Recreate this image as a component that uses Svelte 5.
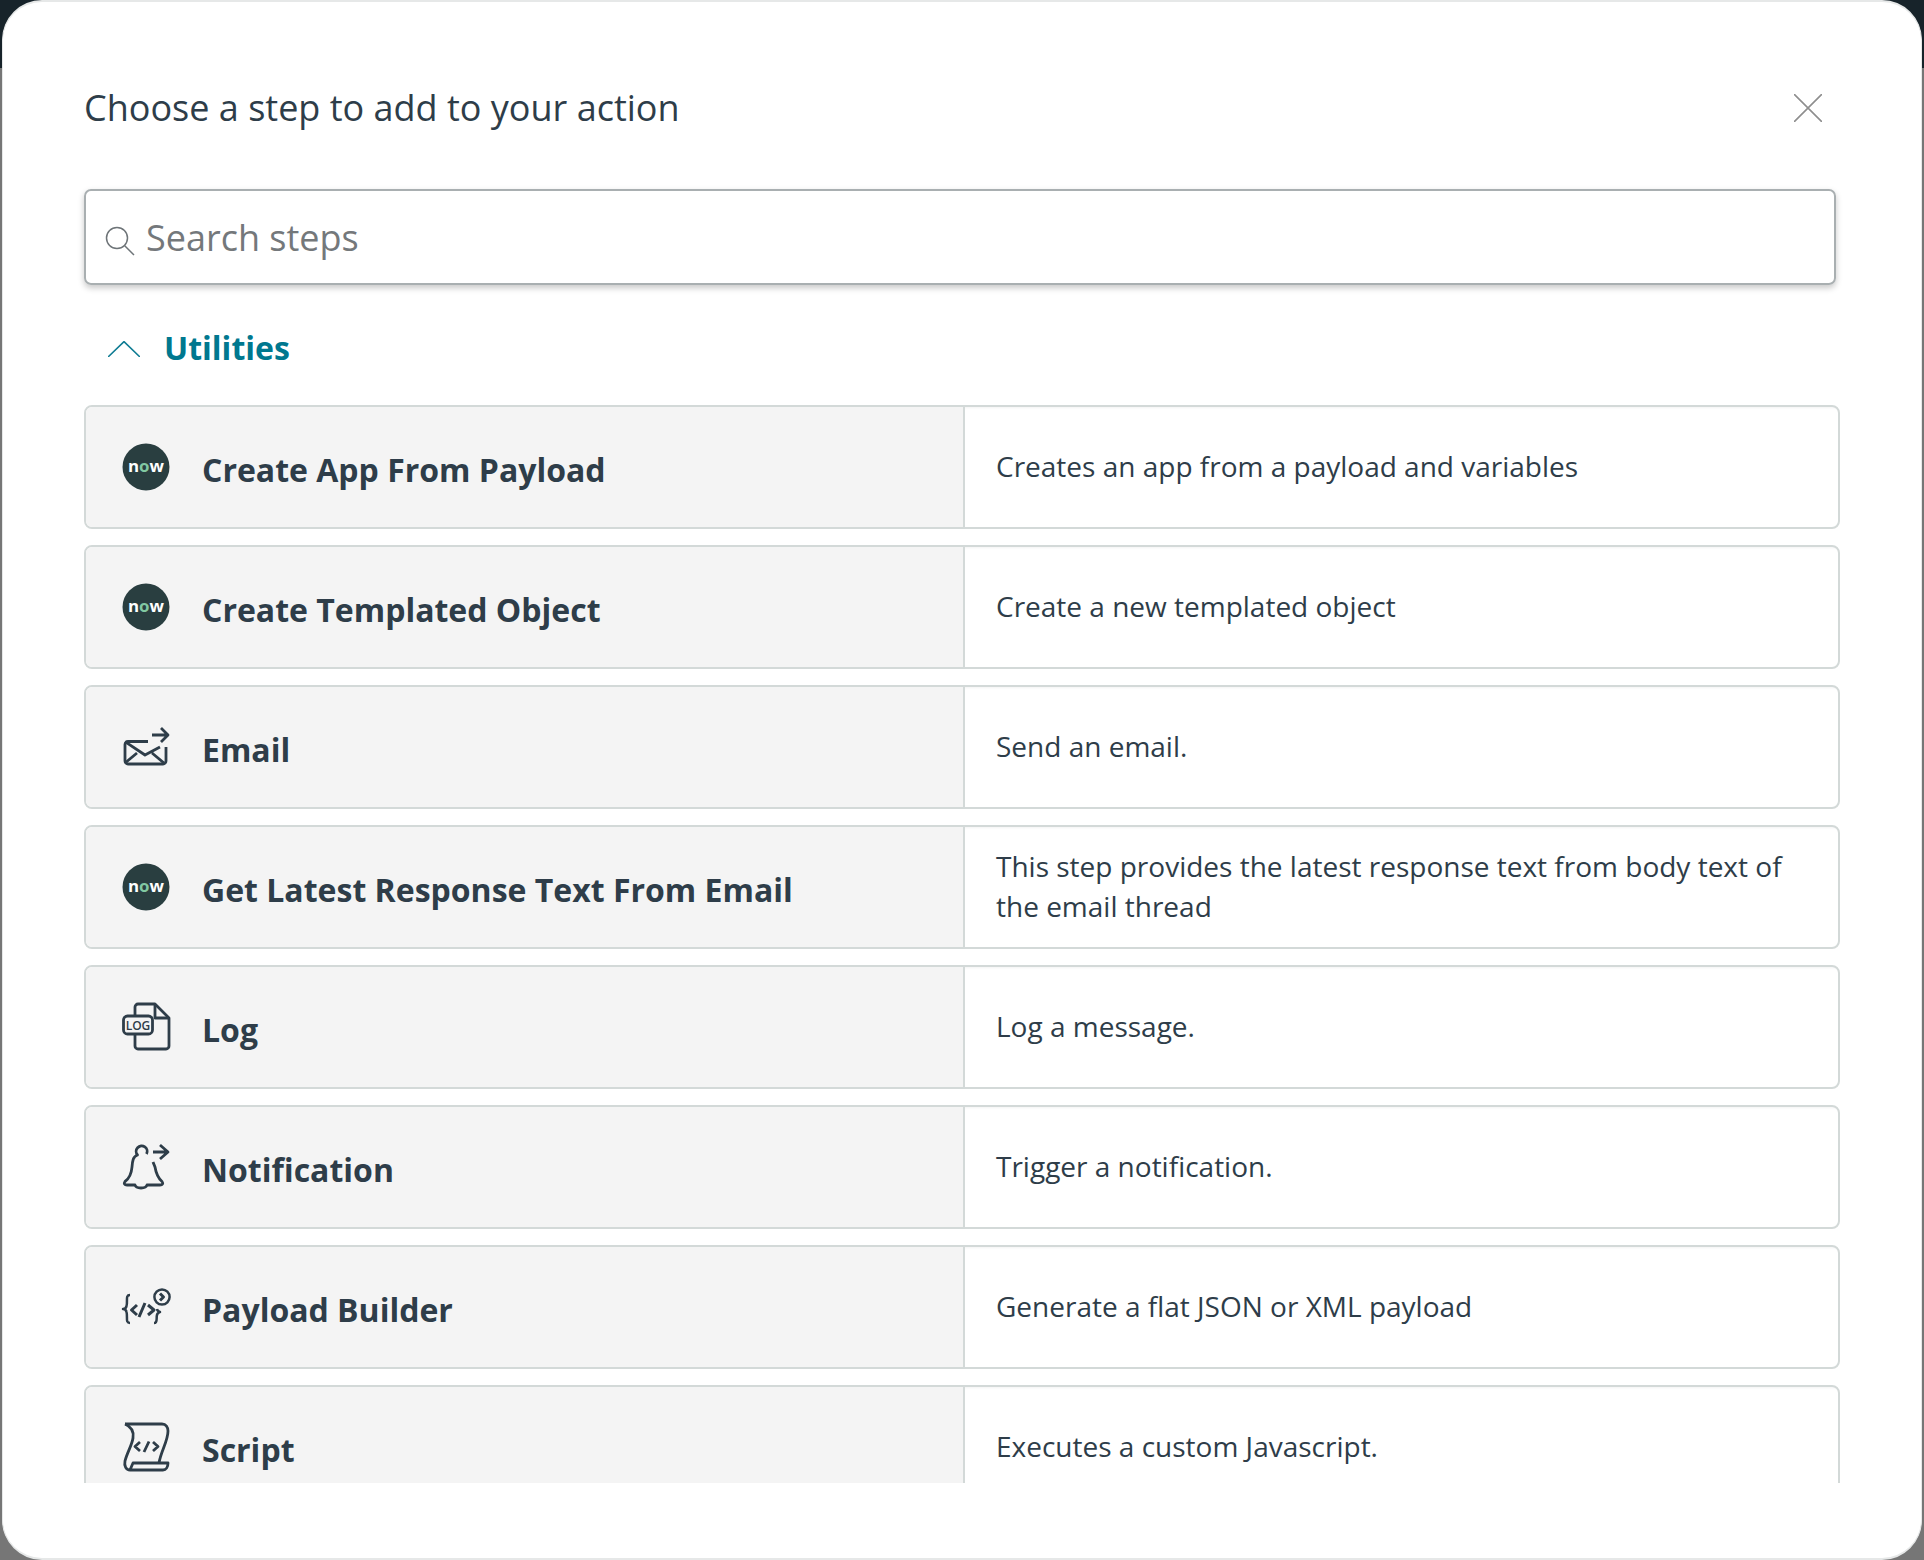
<script lang="ts">
  type Step = {
    name: string;
    description: string;
    icon: "now" | "email" | "log" | "bell" | "payload" | "script";
  };

  const steps: Step[] = [
    { name: "Create App From Payload", description: "Creates an app from a payload and variables", icon: "now" },
    { name: "Create Templated Object", description: "Create a new templated object", icon: "now" },
    { name: "Email", description: "Send an email.", icon: "email" },
    {
      name: "Get Latest Response Text From Email",
      description: "This step provides the latest response text from body text of the email thread",
      icon: "now",
    },
    { name: "Log", description: "Log a message.", icon: "log" },
    { name: "Notification", description: "Trigger a notification.", icon: "bell" },
    { name: "Payload Builder", description: "Generate a flat JSON or XML payload", icon: "payload" },
    { name: "Script", description: "Executes a custom Javascript.", icon: "script" },
  ];
</script>

<div class="backdrop">
  <div class="modal" role="dialog" aria-label="Choose a step">
    <header class="modal-head">
      <h1>Choose a step to add to your action</h1>
      <button type="button" class="close-btn" aria-label="Close">
        <svg viewBox="0 0 28 28" width="28" height="28" fill="none" stroke="#8e8e8e" stroke-width="1.6">
          <path d="M0 0 28 28M28 0 0 28" />
        </svg>
      </button>
    </header>

    <label class="search">
      <svg class="search-icon" viewBox="0 0 26 26" width="26" height="26" fill="none" stroke="#6e7478" stroke-width="1.5">
        <circle cx="11" cy="11" r="10.500" />
        <path d="M18.500 18.500 28 28" />
      </svg>
      <input type="text" placeholder="Search steps" />
    </label>

    <div class="section-head">
      <svg viewBox="0 0 32 16" width="32" height="16" fill="none" stroke="#0f7c93" stroke-width="1.6">
        <path d="M0 16 16 0.6 32 16" />
      </svg>
      <span>Utilities</span>
    </div>

    <ul class="steps">
      {#each steps as step (step.name)}
        <li class="step">
          <div class="step-main">
            <span class="step-icon">
              {#if step.icon === "now"}
                <svg viewBox="0 0 48 48" width="48" height="48">
                  <circle cx="24" cy="24" r="23.5" fill="#293e40" />
                  <text x="24" y="29" text-anchor="middle" textLength="36" lengthAdjust="spacingAndGlyphs" class="now-text">n<tspan fill="#81c8a2">o</tspan>w</text>
                </svg>
              {:else if step.icon === "email"}
                <svg viewBox="0 0 48 48" width="48" height="48" class="line">
                  <path d="M26 18.500H6a3 3 0 0 0-3 3V38a3 3 0 0 0 3 3h35a3 3 0 0 0 3-3V24" />
                  <path d="M3 18.600 23 32 38 24M3 40 15 30M42 40 30 30" />
                  <path d="M30 12H46M39 5l7 7-7 7" />
                </svg>
              {:else if step.icon === "log"}
                <svg viewBox="0 0 48 48" width="48" height="48" class="line">
                  <path d="M13 13V4a3 3 0 0 1 3-3h17l14 14v28a3 3 0 0 1-3 3H16a3 3 0 0 1-3-3V31" />
                  <path d="M33 1v14h14" />
                  <rect x="1.500" y="13" width="29" height="18" rx="4" />
                  <text x="16" y="26.500" text-anchor="middle" class="log-text">LOG</text>
                </svg>
              {:else if step.icon === "bell"}
                <svg viewBox="0 0 48 48" width="48" height="48" class="line">
                  <path d="M24.500 11a5.500 5.500 0 1 0-9 1C11 13.500 10.500 18 10 24 9.500 30 8 35 3 38.500c-1.500 2-.5 3.500 2 3.500H13c1 4 11 4 12 0H38c2.500 0 3.500-1.500 2-3.500C36 35 34 30 33 24L31 19" />
                  <path d="M31 9H46M38 2l8 7-8 7" />
                </svg>
              {:else if step.icon === "payload"}
                <svg viewBox="0 0 48 48" width="48" height="48" class="line thin">
                  <path d="M8 12c-5 0-2 6-3.500 11-.3 2-1 3-3.500 3 2.500 0 3.200 1 3.500 3 1.500 5-1.500 11 3.500 11" />
                  <path d="M32 40c4 0 2-5 3-8 .3-1.500 1-2.500 3-3-2-.5-2.700-1.500-3-3" />
                  <path d="M15 22 9.500 27 15 32M26 22l6 5-6 5M23 20 17 34" class="bold" />
                  <circle cx="40" cy="14" r="7.600" />
                  <path d="M38 10.500 41.500 14 38 17.500" class="bold" />
                </svg>
              {:else}
                <svg viewBox="0 0 48 48" width="48" height="48" class="line">
                  <path d="M3 1H40c4 0 6 3 6 7 0 10-7 20-9 32" />
                  <path d="M3 1c7 3 9 8 8 14C10 22 5 30 3 38c-1 5 1 9 5 9H41c3 0 5-3 5-7H11L8 47" />
                  <path d="M18 19l-5 4.500 5 4.500M31 19l5 4.500-5 4.500M27 18.500l-5 10.500" />
                </svg>
              {/if}
            </span>
            <span class="step-name">{step.name}</span>
          </div>
          <div class="step-desc">{step.description}</div>
        </li>
      {/each}
    </ul>
  </div>
</div>

<style>
  :global(body) {
    margin: 0;
    font-family: "Open Sans", "Noto Sans", sans-serif;
  }

  .backdrop {
    height: 1560px;
    padding: 0 2px;
    box-sizing: border-box;
    background: linear-gradient(#17232a 68px, #767676 68px);
  }

  .modal {
    height: 1560px;
    box-sizing: border-box;
    padding: 0 0 0 81px;
    background: #fff;
    border: solid #e6e8e8;
    border-width: 2px 1px;
    border-radius: 40px;
    display: flex;
    flex-direction: column;
    overflow: hidden;
  }

  .modal-head {
    height: 68px;
    margin-top: 71px;
    margin-bottom: 48px;
    padding-right: 99px;
    display: flex;
    justify-content: space-between;
    align-items: center;
  }

  h1 {
    margin: 0;
    font-size: 36px;
    font-weight: 400;
    color: #2e3d49;
  }

  .close-btn {
    width: 28px;
    height: 28px;
    margin-top: 2px;
    padding: 0;
    border: 0;
    background: none;
    line-height: 0;
  }

  .search {
    width: 1752px;
    height: 96px;
    box-sizing: border-box;
    display: flex;
    align-items: center;
    gap: 14px;
    padding-left: 20px;
    border: 2px solid #a9afb1;
    border-radius: 7px;
    box-shadow: 0 3px 6px rgba(0, 0, 0, 0.22);
  }

  .search-icon {
    flex: none;
    margin-top: 6px;
    overflow: visible;
  }

  .search input {
    flex: 1;
    border: 0;
    outline: 0;
    padding: 0;
    background: none;
    font: 400 36px "Open Sans", sans-serif;
    color: #2e3d49;
  }

  .search input::placeholder {
    color: #74787b;
    opacity: 1;
  }

  .section-head {
    height: 116px;
    padding-top: 4px;
    padding-left: 24px;
    display: flex;
    align-items: center;
    gap: 24px;
    color: #00788f;
    font-size: 32px;
    font-weight: 700;
  }

  .section-head svg {
    margin-top: 4px;
  }

  .steps {
    list-style: none;
    margin: 0;
    padding: 0;
    width: 1756px;
    height: 1078px;
    flex: none;
    overflow: hidden;
    display: flex;
    flex-direction: column;
    gap: 16px;
  }

  .step {
    flex: none;
    height: 124px;
    box-sizing: border-box;
    display: grid;
    grid-template-columns: 877px 1fr;
    border: 2px solid #d3d9d8;
    border-radius: 8px;
    overflow: hidden;
  }

  .step-main {
    display: flex;
    align-items: center;
    gap: 32px;
    padding-left: 36px;
    background: #f4f4f4;
  }

  .step-icon {
    flex: none;
    width: 48px;
    height: 48px;
    line-height: 0;
  }

  .step-icon svg {
    overflow: visible;
  }

  .line {
    fill: none;
    stroke: #2e3d49;
    stroke-width: 2.800;
    stroke-linejoin: round;
  }

  .line.thin {
    stroke-width: 2.500;
  }

  .line .bold {
    stroke-width: 3;
  }

  .now-text {
    font: 700 16.500px "Open Sans", sans-serif;
    fill: #fff;
    stroke: none;
  }

  .log-text {
    font: 600 12px "Open Sans", sans-serif;
    fill: #2e3d49;
    stroke: none;
  }

  .step-name {
    padding-top: 5px;
    font-size: 32px;
    font-weight: 700;
    color: #2e3d49;
  }

  .step-desc {
    display: flex;
    align-items: center;
    padding: 0 30px 2px 31px;
    border-left: 2px solid #d3d9d8;
    box-shadow: inset 0 3px 3px -2px rgba(0, 0, 0, 0.05);
    font-size: 28px;
    line-height: 40px;
    color: #2e3d49;
  }
</style>
